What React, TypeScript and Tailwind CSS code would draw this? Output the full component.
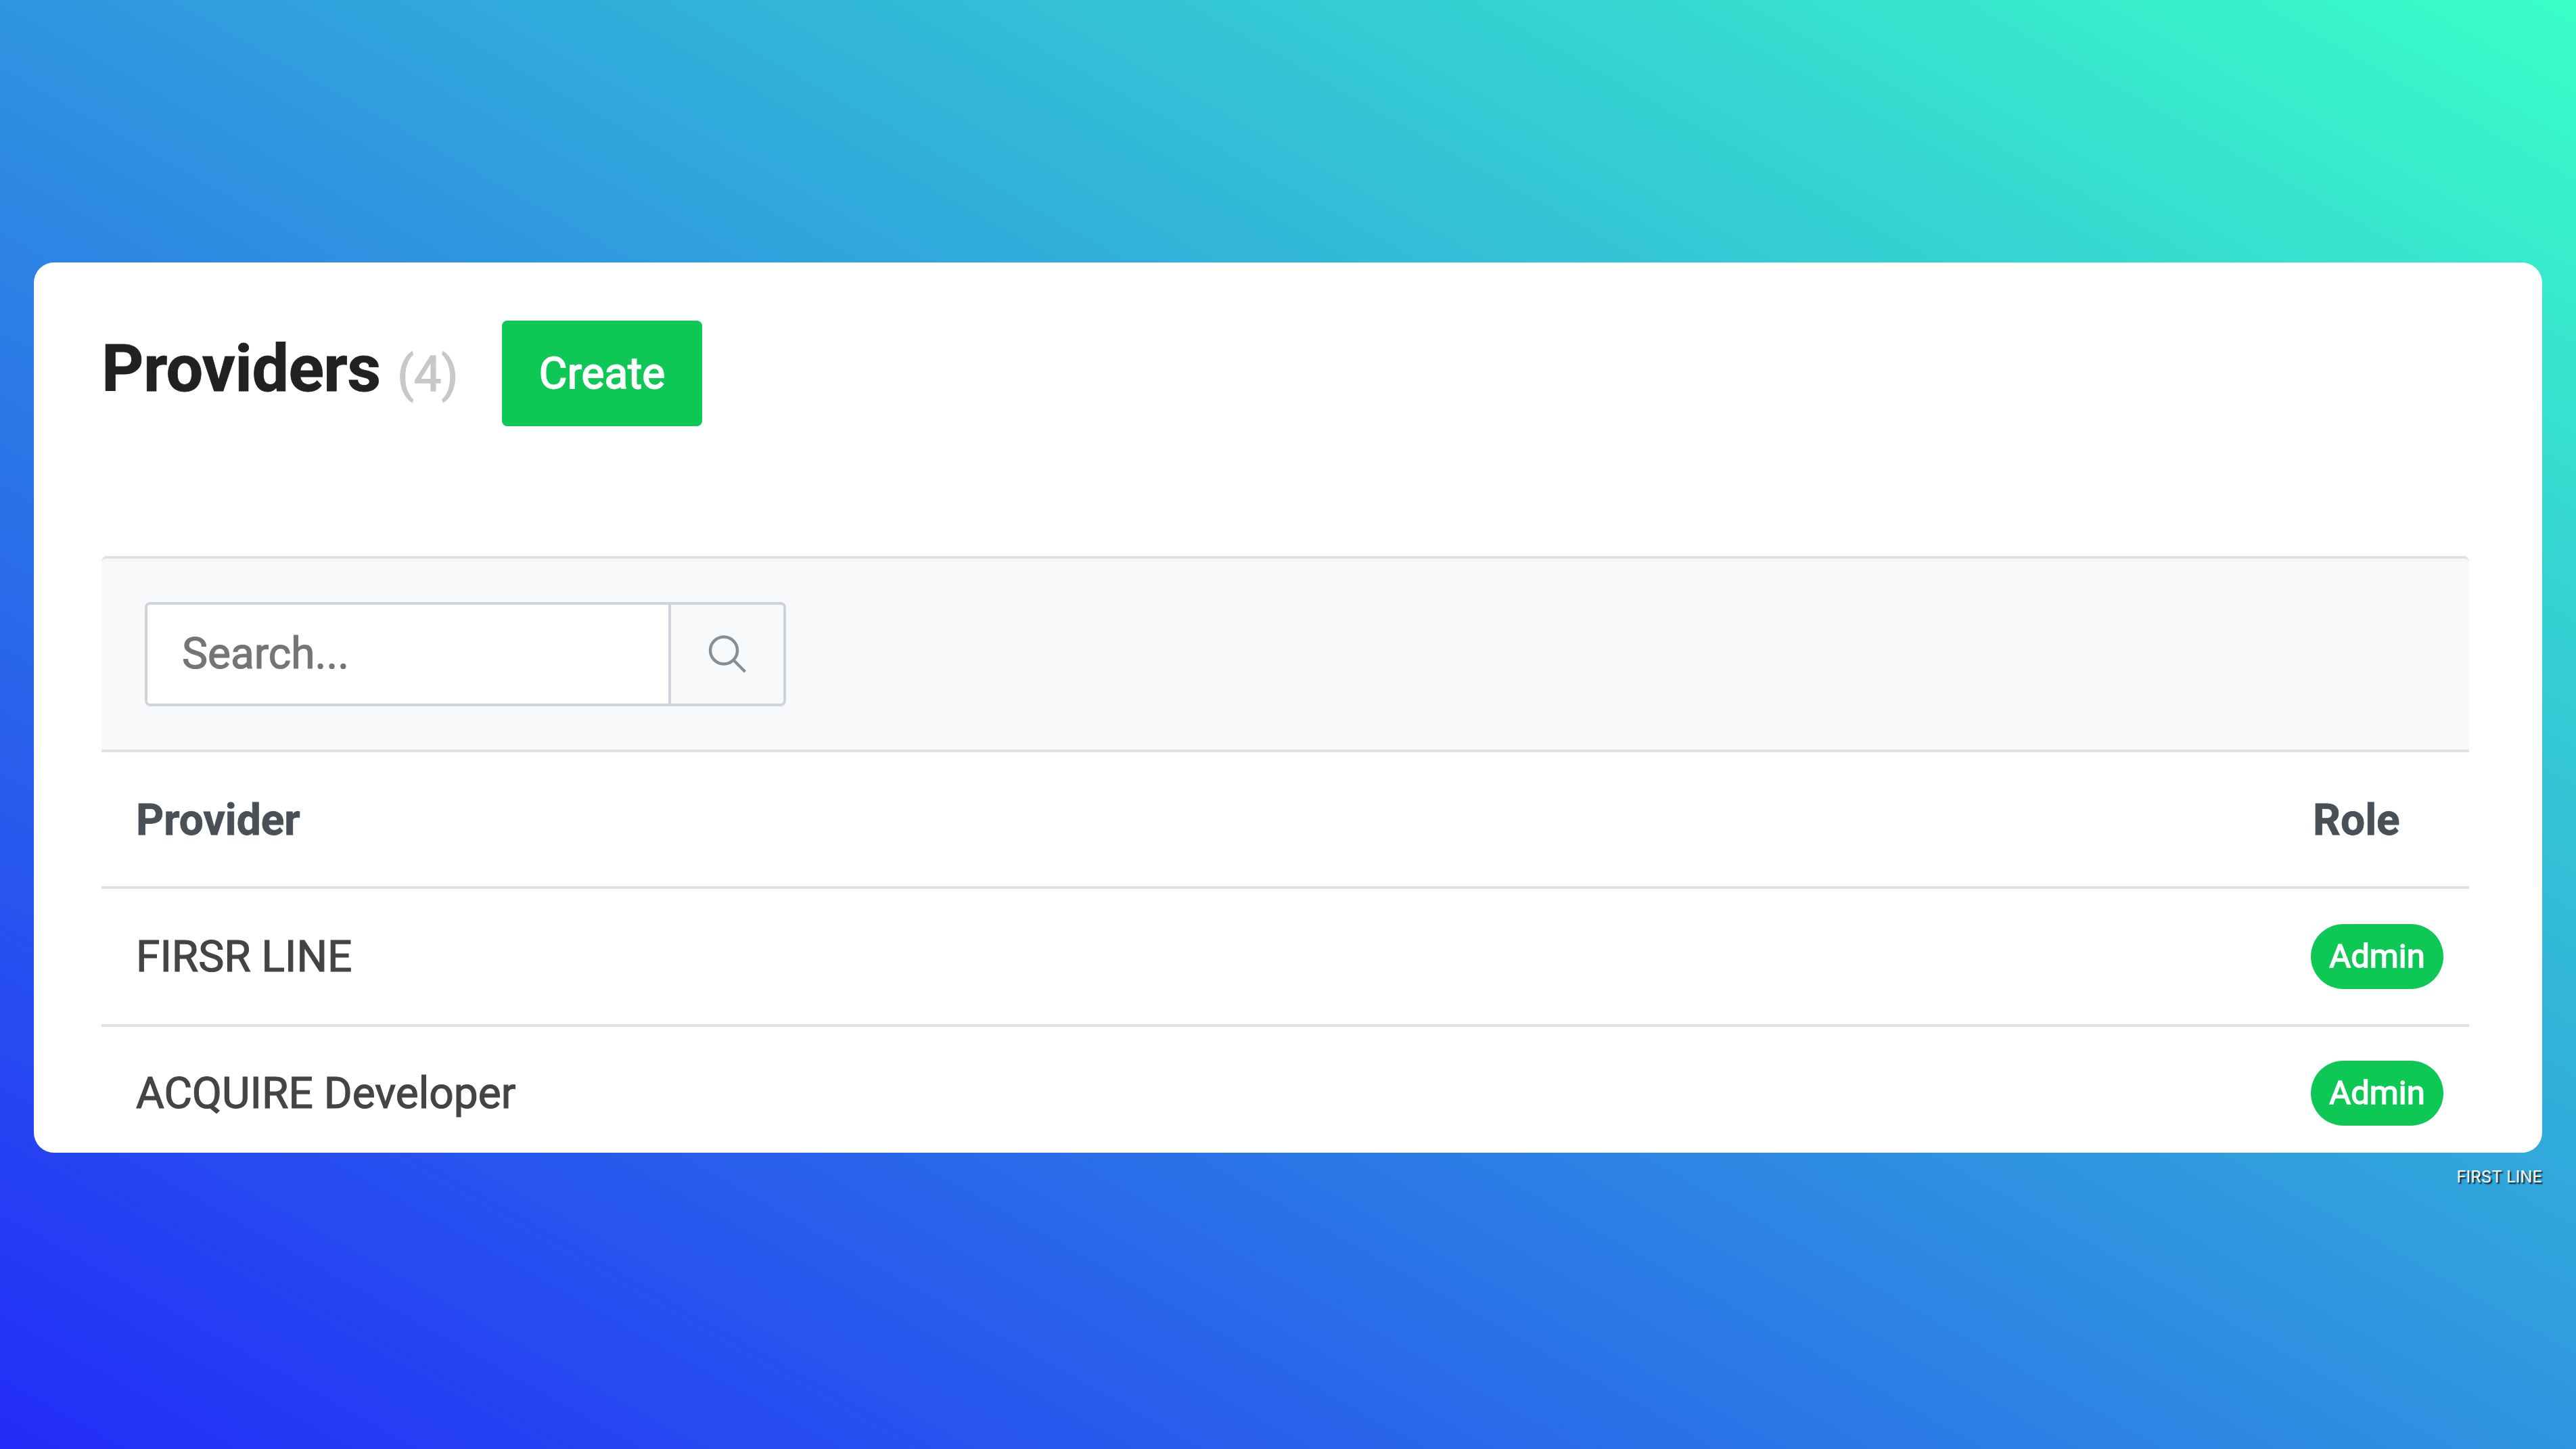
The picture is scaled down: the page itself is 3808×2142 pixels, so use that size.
const providers = [
  { name: "FIRSR LINE", role: "Admin", height: "h-[204px]" },
  { name: "ACQUIRE Developer", role: "Admin", height: "h-[200px]" },
];

function SearchIcon() {
  return (
    <svg viewBox="0 0 56 56" className="h-14 w-14" fill="none" stroke="#868e96" strokeWidth="4.4">
      <circle cx="23" cy="22.5" r="20" />
      <path d="M37 36.5L54.5 54" />
    </svg>
  );
}

export default function App() {
  return (
    <div className="flex h-[2142px] w-[3808px] flex-col overflow-hidden bg-[linear-gradient(to_top_right,#232bf8,#3affc8)] px-[50px] pt-[388px] font-['Roboto',sans-serif] antialiased">
      <main className="h-[1316px] shrink-0 overflow-hidden rounded-[30px] bg-white pr-[108px] pl-[100px]">
        <header className="flex h-[434px] items-start pt-[86px]">
          <h1 className="mt-[13px] flex w-[592px] items-baseline text-[97px] leading-[116px] font-bold whitespace-nowrap text-[#212121] [-webkit-text-stroke:0.8px_#212121]">
            <span className="tracking-[-0.6px]">Providers</span>
            <span className="ml-[25px] text-[72px] font-normal text-[#c8c8c8] [-webkit-text-stroke:1.4px_#c8c8c8]">
              (4)
            </span>
          </h1>
          <button className="h-[156px] w-[296px] rounded-lg bg-[#0dc855] text-[64px] leading-[157px] text-white [-webkit-text-stroke:1.8px_#fff]">
            Create
          </button>
        </header>

        <div className="flex h-[290px] items-center rounded-t-lg border-y-4 border-[#dee2e6] bg-[#f8f9fb] pl-16">
          <div className="flex h-[154px] w-[948px] overflow-hidden rounded-lg border-4 border-[#ced4da]">
            <input
              className="h-full w-[770px] bg-white pb-[2px] pl-[51px] text-[64px] text-[#495057] [-webkit-text-stroke:1.2px_#757575] placeholder:text-[#757575]"
              placeholder="Search..."
            />
            <button className="flex flex-1 items-center justify-center border-l-4 border-[#ced4da]">
              <SearchIcon />
            </button>
          </div>
        </div>

        <section className="text-[64px] leading-[96px] text-[#444]">
          <div className="flex h-[202px] items-center justify-between border-b-4 border-[#dee2e6] pt-1 pl-[51px] font-bold text-[#495057] [-webkit-text-stroke:0.8px_#495057]">
            <span>Provider</span>
            <span className="w-[231px]">Role</span>
          </div>
          {providers.map((p) => (
            <div
              key={p.name}
              className={`flex items-center justify-between border-b-4 border-[#dee2e6] pr-[38px] pl-[51px] ${p.height}`}
            >
              <span className="pt-px [-webkit-text-stroke:1.2px_#444]">{p.name}</span>
              <span className="flex h-24 w-[196px] items-center justify-center rounded-full bg-[#0dc855] pb-px text-[49px] text-white [-webkit-text-stroke:1.5px_#fff]">
                {p.role}
              </span>
            </div>
          ))}
        </section>
      </main>
      <footer className="mt-[19px] text-right font-['Inter',sans-serif] text-[24px] leading-[34px] font-medium text-white/90 [text-shadow:2px_2px_2px_rgba(0,0,0,0.85)]">
        FIRST LINE
      </footer>
    </div>
  );
}
